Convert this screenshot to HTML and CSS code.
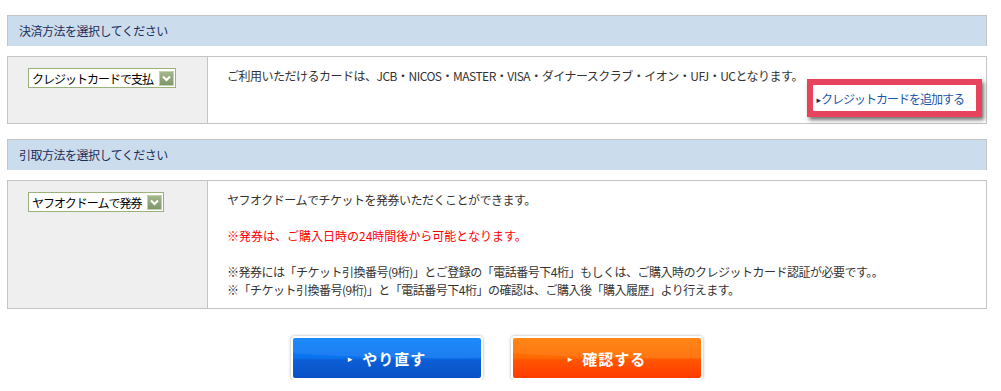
FILE: index.html
```html
<!DOCTYPE html>
<html>
<head>
    <link rel="stylesheet" href="styles.css">
</head>
<body>
    <div class="container">
        <h2 class="section-title">決済方法を選択してください</h2>
        <div class="section-box box-payment">
            <div class="side">
                <div class="fake-select">
                    <span class="fake-select-text">クレジットカードで支払</span>
                    <span class="fake-select-arrow">
                        <svg width="9" height="7" viewBox="0 0 9 7"><path d="M1 1.5 L4.5 5 L8 1.5" fill="none" stroke="#fff" stroke-width="2"/></svg>
                    </span>
                </div>
            </div>
            <div class="main">
                <p>ご利用いただけるカードは、JCB・NICOS・MASTER・VISA・ダイナースクラブ・イオン・UFJ・UCとなります。</p>
                <div class="add-card">
                    <a href="#" class="add-card-link"><span class="tri">&#9656;</span>クレジットカードを追加する</a>
                </div>
            </div>
        </div>

        <h2 class="section-title title-second">引取方法を選択してください</h2>
        <div class="section-box">
            <div class="side">
                <div class="fake-select">
                    <span class="fake-select-text">ヤフオクドームで発券</span>
                    <span class="fake-select-arrow">
                        <svg width="9" height="7" viewBox="0 0 9 7"><path d="M1 1.5 L4.5 5 L8 1.5" fill="none" stroke="#fff" stroke-width="2"/></svg>
                    </span>
                </div>
            </div>
            <div class="main">
                <p>ヤフオクドームでチケットを発券いただくことができます。</p>
                <p class="warn">※発券は、ご購入日時の24時間後から可能となります。</p>
                <p>※発券には「チケット引換番号(9桁)」とご登録の「電話番号下4桁」もしくは、ご購入時のクレジットカード認証が必要です。。<br>※「チケット引換番号(9桁)」と「電話番号下4桁」の確認は、ご購入後「購入履歴」より行えます。</p>
            </div>
        </div>

        <div class="buttons">
            <a href="#" class="btn btn-blue"><span class="btn-tri">&#9656;</span>やり直す</a>
            <a href="#" class="btn btn-orange"><span class="btn-tri">&#9656;</span>確認する</a>
        </div>
    </div>
</body>
</html>
```

FILE: styles.css
```css
body {
    font-family: "Noto Sans CJK JP", "DejaVu Sans", sans-serif;
    font-size: 12px;
    color: #333;
    background-color: #fff;
    margin: 0;
    padding: 0;
}

.container {
    width: 980px;
    margin: 0 0 0 7px;
    padding-top: 15px;
}

.section-title {
    margin: 0;
    height: 30px;
    line-height: 30px;
    padding-left: 11px;
    font-size: 12px;
    font-weight: normal;
    letter-spacing: -0.5px;
    color: #1c2e5a;
    background-color: #cbdcec;
    border: 1px solid #c4c4c4;
    border-bottom: none;
}

.title-second {
    margin-top: 15px;
}

.section-box {
    display: flex;
    margin-top: 10px;
    border: 1px solid #c4c4c4;
}

.side {
    width: 200px;
    flex-shrink: 0;
    background-color: #efefef;
    border-right: 1px solid #c4c4c4;
    padding: 11px 0 0 20px;
    box-sizing: border-box;
}

.main {
    flex: 1;
    padding: 10px 0 9px 19px;
    line-height: 18px;
    letter-spacing: -0.5px;
}

.main p {
    margin: 0;
}

.main p + p {
    margin-top: 18px;
}

.warn {
    color: #ff0000;
    letter-spacing: 0;
}

/* select look-alike */
.fake-select {
    display: inline-flex;
    align-items: center;
    height: 18px;
    padding: 0 1px 0 3px;
    background-color: #fff;
    border: 1px solid #9cb27c;
    color: #000;
    font-size: 12px;
    letter-spacing: -1px;
}

.fake-select-text {
    margin-right: 6px;
}

.fake-select-arrow {
    display: inline-flex;
    align-items: center;
    justify-content: center;
    width: 13px;
    height: 13px;
    background: linear-gradient(#a2b78c, #7f9868);
    border: 1px solid #c3d2ae;
}

.add-card {
    text-align: right;
    margin-top: 5px;
    padding-right: 22px;
    padding-bottom: 5px;
}

.add-card-link {
    position: relative;
    color: #1a56a8;
    text-decoration: none;
    letter-spacing: -1px;
}

.add-card-link .tri {
    color: #1c2e5a;
    font-size: 9px;
    vertical-align: 1px;
    letter-spacing: 0;
}

/* highlight box drawn over the link */
.add-card-link::after {
    content: "";
    position: absolute;
    left: -9px;
    top: -11px;
    right: -18px;
    bottom: -10px;
    border: 6px solid #e8435c;
    box-shadow: 2px 3px 4px rgba(0, 0, 0, 0.55);
}

.buttons {
    display: flex;
    justify-content: center;
    gap: 28px;
    margin-top: 27px;
}

.btn {
    display: flex;
    align-items: center;
    justify-content: center;
    width: 188px;
    height: 40px;
    border: 2px solid #fff;
    border-radius: 4px;
    box-shadow: 0 0 3px rgba(0, 0, 0, 0.35);
    color: #fff;
    font-size: 15px;
    font-weight: bold;
    text-decoration: none;
    letter-spacing: 1px;
}

.btn-tri {
    font-size: 9px;
    margin-right: 9px;
}

.btn-blue {
    background:
        radial-gradient(ellipse 140% 60% at 80% -8%, rgba(255, 255, 255, 0.08) 95%, transparent 97%),
        linear-gradient(#0a80fa 0%, #0a72ee 50%, #0c5ed6 55%, #0a50c4 100%);
}

.btn-orange {
    background:
        radial-gradient(ellipse 140% 60% at 80% -8%, rgba(255, 255, 255, 0.08) 95%, transparent 97%),
        linear-gradient(#ff7c00 0%, #ff6a00 50%, #ff5500 55%, #ff3a00 100%);
}
```
